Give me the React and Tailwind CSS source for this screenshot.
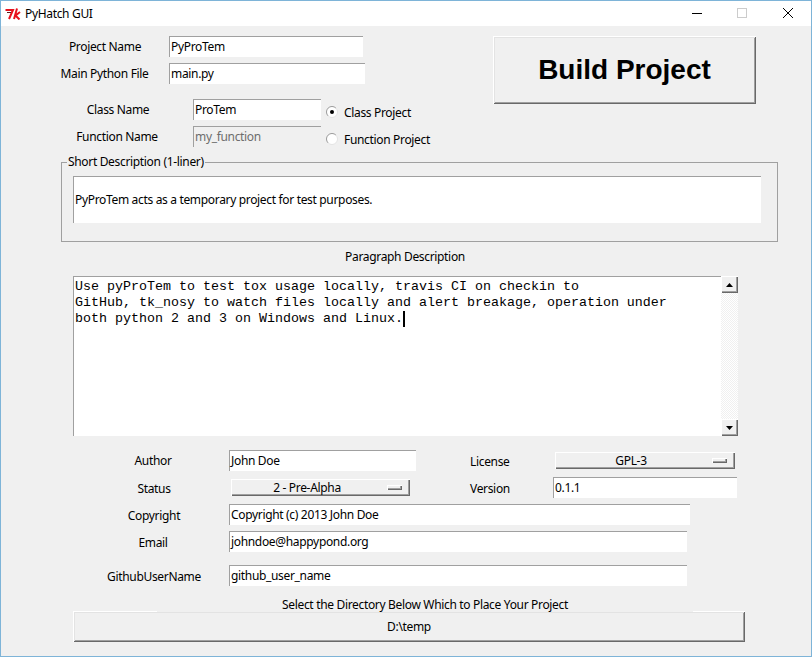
const raised = "shadow-[inset_1px_1px_0_#ffffff,inset_-1px_-1px_0_#696969,inset_2px_2px_0_#e3e3e3,inset_-2px_-2px_0_#a0a0a0]";

function Entry({ className = "", children }) {
  return (
    <div className={"h-[21px] shrink-0 border-t border-l border-[#a0a0a0] pl-[1px] leading-[19px] whitespace-nowrap " + className}>
      {children}
    </div>
  );
}

function Option({ className, text }) {
  return (
    <div className={"relative h-[17px] shrink-0 flex items-center justify-center leading-[15px] bg-[#f0f0f0] shadow-[inset_1px_1px_0_#ffffff,inset_-1px_-1px_0_#696969,inset_-2px_-2px_0_#a0a0a0] " + className}>
      <span>{text}</span>
      <span className="absolute right-[8px] top-[6px] w-[15px] h-[5px] bg-[#f0f0f0] shadow-[inset_1px_1px_0_#ffffff,inset_-1px_-1px_0_#696969,inset_-2px_-2px_0_#a0a0a0]" />
    </div>
  );
}

function Radio({ checked }) {
  return (
    <svg width="12" height="12" viewBox="0 0 12 12" className="shrink-0">
      <circle cx="6" cy="6" r="5.5" fill="#ffffff" />
      <path d="M2.1 9.9 A5.5 5.5 0 0 1 9.9 2.1" fill="none" stroke="#9a9a9a" strokeWidth="1" />
      <path d="M2.1 9.9 A5.5 5.5 0 0 0 9.9 2.1" fill="none" stroke="#e3e3e3" strokeWidth="1" />
      {checked && <circle cx="6" cy="6" r="2" fill="#000000" />}
    </svg>
  );
}

function ScrollButton({ up }) {
  return (
    <div className="h-[17px] w-[17px] shrink-0 flex items-center justify-center bg-[#f0f0f0] shadow-[inset_1px_1px_0_#ffffff,inset_-1px_-1px_0_#696969,inset_-2px_-2px_0_#a0a0a0]">
      <svg width="7" height="4" viewBox="0 0 7 4">
        <polygon points={up ? "3.5,0 7,4 0,4" : "0,0 7,0 3.5,4"} fill="#000000" />
      </svg>
    </div>
  );
}

export default function App() {
  return (
    <div className="w-[812px] h-[657px] border border-[#7eb4d8] flex flex-col overflow-hidden bg-[#f0f0f0] text-black text-[12px] tracking-[-0.33px] font-['Noto_Sans',sans-serif]">
      {/* Title bar */}
      <div className="h-[25px] shrink-0 bg-white flex items-center">
        <svg width="16" height="12" viewBox="0 0 16 12" className="ml-[4px]">
          <path d="M0.5 2 H8 L4 11" fill="none" stroke="#e8101c" strokeWidth="2" />
          <path d="M12 0.5 L9 11 M15 4 L10.5 7.5 L14.5 11.5" fill="none" stroke="#e8101c" strokeWidth="2" />
          <path d="M2 4.5 H6" stroke="#5a1a1a" strokeWidth="1" />
        </svg>
        <span className="ml-[4px] leading-[16px]">PyHatch GUI</span>
        <div className="ml-auto flex items-center pb-[1px]">
          <svg width="10" height="10" viewBox="0 0 10 10" className="mr-[35px]"><path d="M0 5.5 H10" stroke="#000000" strokeWidth="1" /></svg>
          <svg width="10" height="10" viewBox="0 0 10 10" className="mr-[36px]"><rect x="0.5" y="0.5" width="9" height="9" fill="none" stroke="#cccccc" /></svg>
          <svg width="10" height="10" viewBox="0 0 10 10" className="mr-[18px]"><path d="M0 0 L10 10 M10 0 L0 10" stroke="#000000" strokeWidth="1" /></svg>
        </div>
      </div>

      {/* Top section */}
      <div className="flex shrink-0 pt-[10px]">
        <div className="w-[492px] shrink-0 flex flex-col">
          <div className="flex">
            <div className="ml-[60px] w-[88px] text-center leading-[21px]">Project Name</div>
            <Entry className="ml-[20px] w-[194px] bg-white">PyProTem</Entry>
          </div>
          <div className="flex mt-[6px]">
            <div className="ml-[59px] w-[89px] text-center leading-[21px] whitespace-nowrap">Main Python File</div>
            <Entry className="ml-[20px] w-[196px] bg-white">main.py</Entry>
          </div>
          <div className="flex mt-[15px]">
            <div className="ml-[76px] w-[82px] text-center leading-[21px]">Class Name</div>
            <Entry className="ml-[34px] w-[128px] bg-white">ProTem</Entry>
            <div className="ml-[5px] mt-[6px] flex items-center h-[14px]">
              <Radio checked />
              <span className="ml-[6px] mt-[2px] whitespace-nowrap">Class Project</span>
            </div>
          </div>
          <div className="flex mt-[6px]">
            <div className="ml-[69px] w-[94px] text-center leading-[21px] whitespace-nowrap">Function Name</div>
            <Entry className="ml-[29px] w-[128px] text-[#6d6d6d]">my_function</Entry>
            <div className="ml-[5px] mt-[6px] flex items-center h-[14px]">
              <Radio />
              <span className="ml-[6px] mt-[2px] whitespace-nowrap">Function Project</span>
            </div>
          </div>
        </div>
        <button className={"w-[263px] h-[68px] flex items-center justify-center font-['Liberation_Sans',sans-serif] font-bold text-[28px] tracking-normal " + raised}>
          Build Project
        </button>
      </div>

      {/* Short description */}
      <fieldset className="ml-[60px] mt-[7px] w-[717px] h-[88px] shrink-0 border border-[#a0a0a0] pl-[11px]">
        <legend className="-ml-[6px] px-[1px] h-[16px] leading-[16px] whitespace-nowrap">Short Description (1-liner)</legend>
        <Entry className="mt-[6px] w-[688px] !h-[47px] bg-white !leading-[45px]">PyProTem acts as a temporary project for test purposes.</Entry>
      </fieldset>

      {/* Paragraph */}
      <div className="ml-[72px] mt-[7px] w-[664px] h-[16px] shrink-0 text-center leading-[16px]">Paragraph Description</div>
      <div className="ml-[72px] mt-[11px] flex h-[160px] shrink-0">
        <div className="w-[648px] border-t border-l border-[#a0a0a0] bg-white pl-[1px] pt-[2px] font-['Liberation_Mono',monospace] text-[13.33px] tracking-normal leading-[16px] whitespace-pre">
          {"Use pyProTem to test tox usage locally, travis CI on checkin to\nGitHub, tk_nosy to watch files locally and alert breakage, operation under\nboth python 2 and 3 on Windows and Linux."}
          <span className="inline-block w-[2px] h-[16px] bg-black align-top" />
        </div>
        <div className="w-[17px] flex flex-col">
          <ScrollButton up />
          <div className="flex-1 bg-[repeating-conic-gradient(#ffffff_0_25%,#f0f0f0_0_50%)] bg-[length:2px_2px]" />
          <ScrollButton />
        </div>
      </div>

      {/* Author / License */}
      <div className="flex mt-[14px] h-[21px] shrink-0">
        <div className="ml-[99px] w-[106px] text-center leading-[21px]">Author</div>
        <Entry className="ml-[23px] w-[187px] bg-white">John Doe</Entry>
        <div className="ml-[54px] w-[85px] mt-[1px] leading-[21px]">License</div>
        <Option className="mt-[2px] w-[180px] pr-[28px]" text="GPL-3" />
      </div>
      {/* Status / Version */}
      <div className="flex mt-[6px] h-[21px] shrink-0">
        <div className="ml-[100px] w-[106px] text-center leading-[21px] mt-[1px]">Status</div>
        <Option className="ml-[24px] mt-[2px] w-[179px] pr-[27px]" text="2 - Pre-Alpha" />
        <div className="ml-[60px] w-[83px] leading-[21px] mt-[1px]">Version</div>
        <Entry className="w-[184px] bg-white">0.1.1</Entry>
      </div>
      <div className="flex mt-[6px] h-[21px] shrink-0">
        <div className="ml-[100px] w-[106px] text-center leading-[21px] mt-[1px]">Copyright</div>
        <Entry className="ml-[22px] w-[461px] bg-white">Copyright (c) 2013 John Doe</Entry>
      </div>
      <div className="flex mt-[6px] h-[21px] shrink-0">
        <div className="ml-[99px] w-[106px] text-center leading-[21px] mt-[1px]">Email</div>
        <Entry className="ml-[23px] w-[458px] bg-white">johndoe@happypond.org</Entry>
      </div>
      <div className="flex mt-[13px] h-[21px] shrink-0">
        <div className="ml-[100px] w-[106px] text-center leading-[21px] mt-[1px] whitespace-nowrap">GithubUserName</div>
        <Entry className="ml-[22px] w-[458px] bg-white">github_user_name</Entry>
      </div>

      {/* Directory */}
      <div className="relative z-10 ml-[156px] mt-[11px] w-[536px] h-[15px] shrink-0 bg-[#f0f0f0] text-center leading-[15px]">Select the Directory Below Which to Place Your Project</div>
      <button className={"ml-[72px] -mt-[1px] w-[672px] h-[31px] shrink-0 text-center leading-[30px] " + raised}>D:\temp</button>
    </div>
  );
}
